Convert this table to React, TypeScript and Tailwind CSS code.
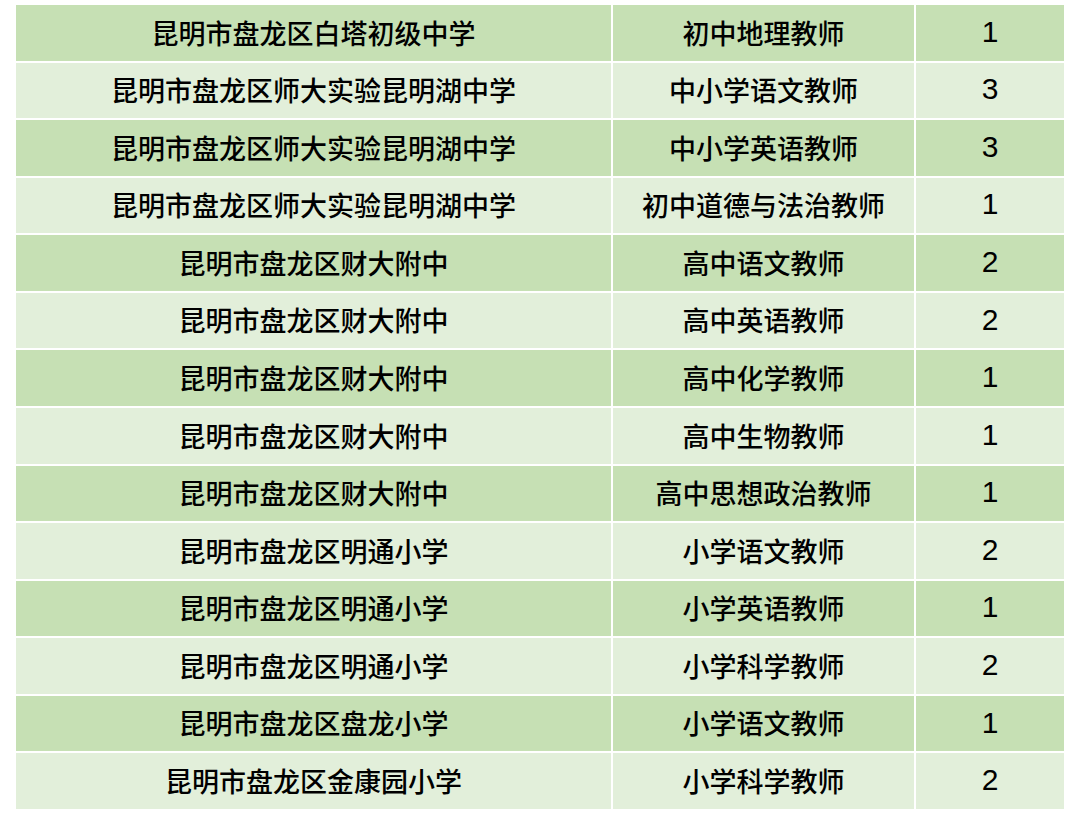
import React from "react";

const rows: [string, string, string][] = [
  ["昆明市盘龙区白塔初级中学", "初中地理教师", "1"],
  ["昆明市盘龙区师大实验昆明湖中学", "中小学语文教师", "3"],
  ["昆明市盘龙区师大实验昆明湖中学", "中小学英语教师", "3"],
  ["昆明市盘龙区师大实验昆明湖中学", "初中道德与法治教师", "1"],
  ["昆明市盘龙区财大附中", "高中语文教师", "2"],
  ["昆明市盘龙区财大附中", "高中英语教师", "2"],
  ["昆明市盘龙区财大附中", "高中化学教师", "1"],
  ["昆明市盘龙区财大附中", "高中生物教师", "1"],
  ["昆明市盘龙区财大附中", "高中思想政治教师", "1"],
  ["昆明市盘龙区明通小学", "小学语文教师", "2"],
  ["昆明市盘龙区明通小学", "小学英语教师", "1"],
  ["昆明市盘龙区明通小学", "小学科学教师", "2"],
  ["昆明市盘龙区盘龙小学", "小学语文教师", "1"],
  ["昆明市盘龙区金康园小学", "小学科学教师", "2"],
];

export default function App() {
  return (
    <div className="w-[1080px] h-[817px] bg-white pt-[5px] pl-[16px]">
      <div className="w-[1048px] h-[804px] grid grid-cols-[595px_301px_148px] grid-rows-[repeat(14,1fr)] gap-[2px] bg-white">
        {rows.map((r, i) => {
          const bg = i % 2 === 0 ? "bg-[#C6E0B4]" : "bg-[#E2EFDA]";
          return (
            <React.Fragment key={i}>
              <div
                className={`${bg} flex items-center justify-center text-[27px] font-medium text-black font-['Noto_Sans_CJK_SC','Noto_Sans',sans-serif]`}
              >
                {r[0]}
              </div>
              <div
                className={`${bg} flex items-center justify-center text-[27px] font-medium text-black font-['Noto_Sans_CJK_SC','Noto_Sans',sans-serif]`}
              >
                {r[1]}
              </div>
              <div
                className={`${bg} flex items-center justify-center pb-[3px] text-[30px] text-black font-['Liberation_Sans',Arial,sans-serif]`}
              >
                {r[2]}
              </div>
            </React.Fragment>
          );
        })}
      </div>
    </div>
  );
}
